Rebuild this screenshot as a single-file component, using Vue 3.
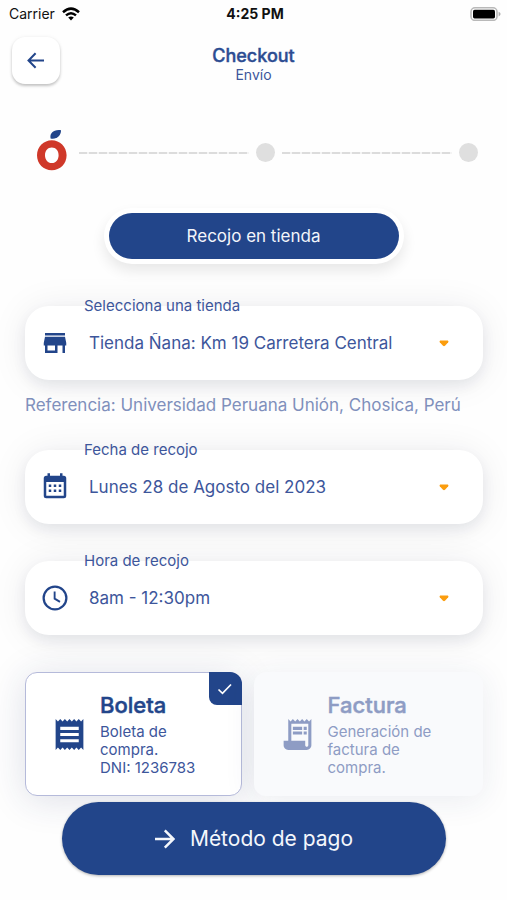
<script setup>
import { ref } from 'vue'

const fields = ref([
  {
    id: 'store',
    label: 'Selecciona una tienda',
    value: 'Tienda Ñana: Km 19 Carretera Central',
    note: 'Referencia: Universidad Peruana Unión, Chosica, Perú',
  },
  { id: 'date', label: 'Fecha de recojo', value: 'Lunes 28 de Agosto del 2023' },
  { id: 'time', label: 'Hora de recojo', value: '8am - 12:30pm' },
])

const receipt = ref('boleta')
</script>

<template>
  <div class="page">
    <div class="status">
      <div class="carrier">
        <span>Carrier</span>
        <svg class="wifi" viewBox="0 0 18 14">
          <g fill="none" stroke="#000" stroke-width="2.5">
            <path d="M1 5.2Q9-2 17 5.2" />
            <path d="M4 8.4Q9 4 14 8.4" />
          </g>
          <path d="M6.2 10.6Q9 8.4 11.8 10.6L9 13.6Z" />
        </svg>
      </div>
      <strong class="clock">4:25 PM</strong>
      <svg class="battery" viewBox="0 0 31 14">
        <rect x="1" y="0.8" width="26" height="12.6" rx="4" fill="#fff" stroke="#b9b9b9" stroke-width="1.6" />
        <rect x="3" y="2.8" width="22" height="8.6" rx="1.6" />
        <path d="M28.6 4.8Q30.6 5.6 30.6 7.1T28.6 9.4Z" fill="#b0b0b0" />
      </svg>
    </div>

    <header class="header">
      <button class="back" type="button" aria-label="Volver">
        <svg viewBox="0 0 18 18">
          <path d="M17 8.500H2M8.600 1.200 1.500 8.500l7.100 7.300" fill="none" stroke="currentColor" stroke-width="2" />
        </svg>
      </button>
      <div class="titles">
        <h1>Checkout</h1>
        <p>Envío</p>
      </div>
    </header>

    <div class="stepper">
      <svg class="logo" viewBox="0 0 36 47">
        <path
          d="M15.8 11.2C23.8 11.2 30.6 17.6 30.6 26.2S24.2 41.2 15.8 41.2 1 34.8 1 26.2 7.8 11.2 15.8 11.2ZM15.8 18.6C11.6 18.6 9 22 9 26.2S11.6 34 15.8 34 22.6 30.6 22.6 26.2 20 18.6 15.8 18.6Z"
          fill="#cf3829" fill-rule="evenodd"
        />
        <path d="M14.6 9.4C13.4 4.2 17.6.2 25 1.2 25.2 6.4 20.4 10.8 14.6 9.4Z" fill="#22458a" />
      </svg>
      <i class="line"></i>
      <i class="dot"></i>
      <i class="line"></i>
      <i class="dot"></i>
    </div>

    <div class="tabs">
      <button class="tab" type="button">Recojo en tienda</button>
    </div>

    <main class="form">
      <div v-for="f in fields" :key="f.id" class="group">
        <div class="field">
          <label class="field-label" :for="f.id">{{ f.label }}</label>
          <svg v-if="f.id === 'store'" class="field-icon" viewBox="0 0 24 24" fill="currentColor">
            <path d="M20 4H4v2h16V4zm1 10v-2l-1-5H4l-1 5v2h1v6h10v-6h4v6h2v-6h1zm-9 4H6v-4h6v4z" />
          </svg>
          <svg v-else-if="f.id === 'date'" class="field-icon" viewBox="0 0 24 24" fill="currentColor">
            <path d="M9 10v2H7v-2h2m4 0v2h-2v-2h2m4 0v2h-2v-2h2m2-7a2 2 0 0 1 2 2v14a2 2 0 0 1-2 2H5a2 2 0 0 1-2-2V5a2 2 0 0 1 2-2h1V1h2v2h8V1h2v2h1m0 16V8H5v11h14M9 14v2H7v-2h2m4 0v2h-2v-2h2m4 0v2h-2v-2h2Z" />
          </svg>
          <svg v-else class="field-icon" viewBox="0 0 24 24" fill="none" stroke="currentColor">
            <circle cx="12" cy="12" r="9.1" stroke-width="1.8" />
            <path d="M11.7 6.8v5.700l4.300 2.600" stroke-width="1.500" />
          </svg>
          <select :id="f.id" class="select">
            <option>{{ f.value }}</option>
          </select>
          <svg class="caret" viewBox="0 0 10 7">
            <path d="M1.2.5h7.6q1.2.6.4 1.8L6 5.8q-1 .9-2 0L.8 2.3Q0 1.100 1.200.5Z" fill="#fb9d0e" />
          </svg>
        </div>
        <p v-if="f.note" class="note">{{ f.note }}</p>
      </div>

      <div class="cards">
        <label class="card" :class="{ active: receipt === 'boleta' }">
          <input v-model="receipt" type="radio" name="receipt" value="boleta" />
          <svg class="card-icon" viewBox="0 0 24 24" fill="currentColor">
            <path d="M18 17H6v-2h12v2zm0-4H6v-2h12v2zm0-4H6V7h12v2zM3 22l1.500-1.500L6 22l1.500-1.500L9 22l1.500-1.500L12 22l1.500-1.500L15 22l1.500-1.500L18 22l1.500-1.500L21 22V2l-1.500 1.500L18 2l-1.500 1.500L15 2l-1.500 1.500L12 2l-1.500 1.500L9 2 7.500 3.500 6 2 4.500 3.500 3 2v20z" />
          </svg>
          <span class="card-text">
            <b>Boleta</b>
            <span>Boleta de compra.<br />DNI: 1236783</span>
          </span>
          <span v-if="receipt === 'boleta'" class="check">
            <svg viewBox="0 0 16 12"><path d="M1.500 6.500 5.500 10.300 14 1.500" fill="none" stroke="#fff" stroke-width="1.700" /></svg>
          </span>
        </label>
        <label class="card" :class="{ active: receipt === 'factura' }">
          <input v-model="receipt" type="radio" name="receipt" value="factura" />
          <svg class="card-icon" viewBox="0 0 24 24" fill="currentColor">
            <path d="M19.500 3.500 18 2l-1.500 1.500L15 2l-1.500 1.500L12 2l-1.500 1.500L9 2 7.500 3.500 6 2v14H3v3c0 1.660 1.340 3 3 3h12c1.660 0 3-1.340 3-3V2l-1.500 1.500zM19 19c0 .55-.45 1-1 1s-1-.45-1-1v-3H8V5h11v14z" />
            <path d="M9 7h6v2H9zM16 7h2v2h-2zM9 10h6v2H9zM16 10h2v2h-2z" />
          </svg>
          <span class="card-text">
            <b>Factura</b>
            <span>Generación de factura de compra.</span>
          </span>
          <span v-if="receipt === 'factura'" class="check">
            <svg viewBox="0 0 16 12"><path d="M1.500 6.500 5.500 10.300 14 1.500" fill="none" stroke="#fff" stroke-width="1.700" /></svg>
          </span>
        </label>
      </div>
    </main>

    <footer class="footer">
      <button class="pay" type="button">
        <svg viewBox="0 0 20 20">
          <path d="M0 10h17.500M9.800 1.300 18.500 10l-8.700 8.700" fill="none" stroke="currentColor" stroke-width="2.500" />
        </svg>
        <span>Método de pago</span>
      </button>
    </footer>
  </div>
</template>

<style>
body {
  margin: 0;
  background: #fefefe;
}
</style>

<style scoped>
.page {
  --blue: #22458a;
  --text: #3d569b;
  display: flex;
  flex-direction: column;
  min-height: 100vh;
  box-sizing: border-box;
  overflow: hidden;
  font-family: Inter, "Liberation Sans", sans-serif;
  color: var(--text);
}
h1, p {
  margin: 0;
}
button, select {
  font-family: inherit;
  border: 0;
}
.status {
  display: grid;
  grid-template-columns: 1fr auto 1fr;
  align-items: center;
  height: 27px;
  padding: 0 6px 0 9px;
  color: #111;
  font-size: 14px;
}
.carrier {
  display: flex;
  align-items: center;
  gap: 7px;
}
.wifi {
  width: 18px;
  height: 14px;
}
.clock {
  font-size: 14px;
  font-weight: 700;
}
.battery {
  justify-self: end;
  width: 31px;
  height: 14px;
}
.header {
  display: grid;
  grid-template-columns: 48px 1fr 48px;
  align-items: center;
  padding: 10px 12px 0;
}
.back {
  display: grid;
  place-items: center;
  width: 48px;
  height: 47px;
  padding: 0;
  border-radius: 13px;
  background: #fff;
  color: var(--blue);
  box-shadow: 0 2px 3px rgba(0, 0, 0, 0.22), 0 0 4px rgba(0, 0, 0, 0.05);
}
.back svg {
  width: 18px;
  height: 18px;
}
.titles {
  padding-top: 6px;
  text-align: center;
}
.titles h1 {
  font-size: 18px;
  line-height: 22px;
  font-weight: 500;
  color: #2c4c92;
  -webkit-text-stroke: 0.4px currentColor;
}
.titles p {
  font-size: 14px;
  line-height: 16px;
}
.stepper {
  display: flex;
  align-items: center;
  gap: 7px;
  padding: 45px 29px 0 36px;
}
.logo {
  width: 36px;
  height: 47px;
}
.line {
  flex: 1;
  height: 2px;
  background: repeating-linear-gradient(90deg, #dcdcdc 0 8px, #f4f4f4 8px 10px);
}
.dot {
  width: 19px;
  height: 19px;
  border-radius: 50%;
  background: #dfdfdf;
}
.tabs {
  align-self: center;
  display: flex;
  width: 300px;
  box-sizing: border-box;
  margin-top: 32px;
  padding: 5px;
  border-radius: 28px;
  background: #fff;
  box-shadow: 0 7px 14px rgba(0, 0, 0, 0.09);
}
.tab {
  flex: 1;
  height: 46px;
  border-radius: 23px;
  background: var(--blue);
  color: #f2f5fb;
  font-size: 17px;
}
.form {
  display: flex;
  flex-direction: column;
  gap: 37px;
  padding: 42px 24px 0 25px;
}
.field {
  position: relative;
  display: flex;
  align-items: center;
  height: 74px;
  border-radius: 24px;
  background: #fff;
  box-shadow: 0 6px 14px rgba(20, 25, 50, 0.07), 0 2px 36px rgba(20, 25, 50, 0.08);
}
.field-label {
  position: absolute;
  left: 59px;
  top: -10px;
  font-size: 15px;
  line-height: 20px;
}
.field-icon {
  flex: none;
  width: 30px;
  height: 30px;
  margin-left: 15px;
  color: var(--blue);
}
.select {
  flex: 1;
  min-width: 0;
  height: 74px;
  margin-left: 19px;
  padding: 0;
  appearance: none;
  background: transparent;
  color: var(--text);
  font-size: 17px;
}
.caret {
  flex: none;
  width: 10px;
  height: 7px;
  margin-right: 34px;
}
.note {
  margin-top: 13px;
  margin-bottom: -4px;
  color: #8191bd;
  font-size: 17px;
  line-height: 24px;
  white-space: nowrap;
}
.cards {
  display: grid;
  grid-template-columns: 217fr 230fr;
  gap: 12px;
}
.card {
  position: relative;
  display: flex;
  align-items: center;
  gap: 12px;
  box-sizing: border-box;
  height: 124px;
  padding: 0 24px 0 25px;
  border-radius: 12px;
  background: #f9fafc;
  color: #8e9cc4;
  box-shadow: 0 4px 32px rgba(34, 50, 100, 0.09);
}
.card.active {
  background: #fff;
  border: 1px solid #b5bada;
  color: var(--text);
  box-shadow: 0 4px 36px rgba(34, 50, 100, 0.15);
}
.card input {
  position: absolute;
  opacity: 0;
}
.card-icon {
  flex: none;
  width: 37px;
  height: 37px;
}
.active .card-icon, .active b {
  color: var(--blue);
}
.card-text {
  display: flex;
  flex-direction: column;
  gap: 4px;
  font-size: 15px;
  line-height: 18px;
}
.card-text b {
  font-size: 22px;
  line-height: 28px;
  font-weight: 500;
  -webkit-text-stroke: 0.5px currentColor;
}
.check {
  position: absolute;
  top: -1px;
  right: -1px;
  display: grid;
  place-items: center;
  width: 33px;
  height: 33px;
  border-radius: 0 12px 0 8px;
  background: var(--blue);
}
.check svg {
  width: 16px;
  height: 12px;
}
.footer {
  position: relative;
  padding: 6px 61px 24px 62px;
}
.pay {
  display: flex;
  align-items: center;
  justify-content: center;
  gap: 15px;
  width: 100%;
  height: 73px;
  border-radius: 37px;
  background: var(--blue);
  color: #f4f7fc;
  font-size: 21px;
  box-shadow: 0 1px 3px rgba(0, 0, 0, 0.3);
}
.pay svg {
  width: 20px;
  height: 20px;
}
</style>
